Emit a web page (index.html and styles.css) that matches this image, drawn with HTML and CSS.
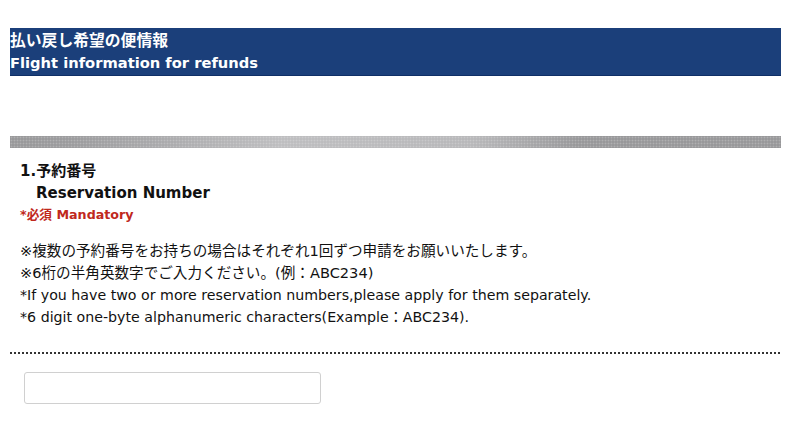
FILE: index.html
```html
<!DOCTYPE html>
<html lang="ja">
<head>
<meta charset="utf-8">
<title>Flight information for refunds</title>
<link rel="stylesheet" href="styles.css">
</head>
<body>
<div class="page">
  <div class="head">
    <div class="head-ja">払い戻し希望の便情報</div>
    <div class="head-en">Flight information for refunds</div>
  </div>
  <div class="bar"></div>
  <div class="section">
    <div class="q-ja">1.予約番号</div>
    <div class="q-en">Reservation Number</div>
    <div class="req">*必須 Mandatory</div>
    <div class="notes">
      <p class="ja">※複数の予約番号をお持ちの場合はそれぞれ1回ずつ申請をお願いいたします。</p>
      <p class="ja">※6桁の半角英数字でご入力ください。(例：ABC234)</p>
      <p>*If you have two or more reservation numbers,please apply for them separately.</p>
      <p>*6 digit one-byte alphanumeric characters(Example：ABC234).</p>
    </div>
  </div>
  <div class="dots"></div>
  <div class="field">
    <input class="input" type="text">
  </div>
</div>
</body>
</html>
```
FILE: styles.css
```css
html, body { margin: 0; padding: 0; background: #fff; }
body { font-family: "DejaVu Sans", "Noto Sans CJK JP", sans-serif; color: #111; }
.page { padding: 28px 19px 0 10px; }
.head {
  background: #1b3f7a;
  color: #fff;
  font-weight: bold;
  font-size: 15px;
  padding: 2px 0 2px 0;
  height: 43px;
  border-bottom: 1px solid #0f2f66;
}
.head-ja { line-height: 21px; font-size: 15.8px; }
.head-en { line-height: 24px; font-size: 14.7px; }
.bar {
  margin-top: 60px;
  height: 12px;
  background:
    radial-gradient(circle, rgba(255,255,255,0.22) 0.8px, transparent 1.1px) 0 0 / 3px 3px,
    linear-gradient(to right, #98989a 0%, #9c9c9e 8%, #bebec0 35%, #b8b8ba 60%, #98989a 74%, #98989a 100%);
}
.section { padding: 13px 0 0 10px; }
.q-ja { font-weight: bold; font-size: 15px; line-height: 20px; }
.q-en { font-weight: bold; font-size: 15px; line-height: 24px; padding-left: 16px; }
.req { color: #c0281c; font-weight: bold; font-size: 12.7px; line-height: 20px; }
.notes { margin-top: 15px; font-size: 14.2px; line-height: 22px; }
.notes p { margin: 0; }
.notes .ja { font-size: 14.6px; }
.dots {
  margin-top: 24px;
  height: 2px;
  background: linear-gradient(to right, #333 0 2px, transparent 2px 4px) 0 0 / 4px 2px repeat-x;
}
.field { padding: 18px 0 0 14px; }
.input {
  display: block;
  width: 297px;
  height: 32px;
  box-sizing: border-box;
  border: 1px solid #d0d0d0;
  border-radius: 3px;
  background: #fff;
  margin: 0;
  padding: 0 6px;
}
```
